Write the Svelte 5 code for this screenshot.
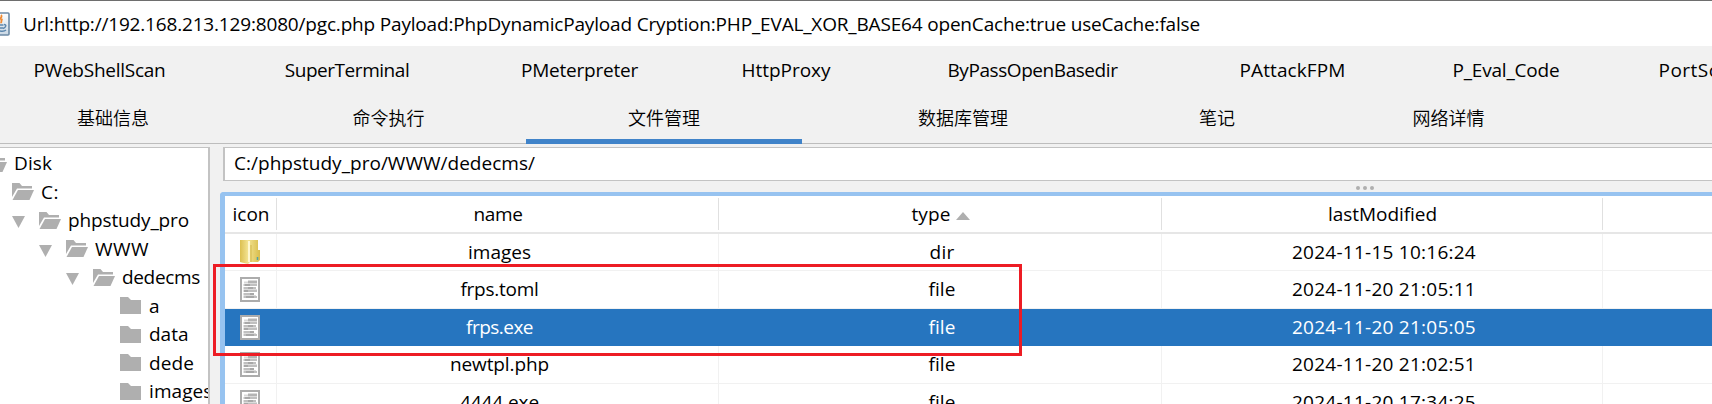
<script>
  const plugins = [
    ['PWebShellScan', 248, 132],
    ['SuperTerminal', 247, 124.5],
    ['PMeterpreter', 218, 117],
    ['HttpProxy', 195, 89],
    ['ByPassOpenBasedir', 298, 170],
    ['PAttackFPM', 222, 106],
    ['P_Eval_Code', 205, 107],
    ['PortScan', 183, 83],
  ];
  const tabs = [
    ['基础信息', 276],
    ['命令执行', 275],
    ['文件管理', 276],
    ['数据库管理', 322],
    ['笔记', 186],
    ['网络详情', 277],
  ];
  const active = '文件管理';

  const tree = [
    { name: 'Disk', level: -1, open: true, w: 38 },
    { name: 'C:', level: 0, open: true, w: 18 },
    { name: 'phpstudy_pro', level: 1, open: true, arrow: true, w: 121 },
    { name: 'WWW', level: 2, open: true, arrow: true, w: 54 },
    { name: 'dedecms', level: 3, open: true, arrow: true, w: 78 },
    { name: 'a', level: 4, w: 10.5 },
    { name: 'data', level: 4, w: 39.5 },
    { name: 'dede', level: 4, w: 45 },
    { name: 'images', level: 4, w: 63.5 },
  ];

  const files = [
    { name: 'images', nw: 63, type: 'dir', tw: 25, date: '2024-11-15 10:16:24' },
    { name: 'frps.toml', nw: 78, type: 'file', tw: 27, date: '2024-11-20 21:05:11' },
    { name: 'frps.exe', nw: 67, type: 'file', tw: 27, date: '2024-11-20 21:05:05', selected: true },
    { name: 'newtpl.php', nw: 99, type: 'file', tw: 27, date: '2024-11-20 21:02:51' },
    { name: '4444.exe', nw: 79, type: 'file', tw: 27, date: '2024-11-20 17:34:25' },
  ];

  // Spreads the letters of a label so that it takes the given width.
  function fit(node, width) {
    const natural = node.getBoundingClientRect().width;
    node.style.letterSpacing = (width - natural) / node.textContent.length + 'px';
  }
</script>

{#snippet page()}
  <svg class="page" width="20" height="25" viewBox="0 0 20 25">
    <rect x="1" y="1" width="18" height="23" fill="#fff" stroke="#acacac" stroke-width="2" />
    <path d="M8 5H17" stroke="#b4b4b4" stroke-width="3" />
    <path d="M4 5.500H8" stroke="#d8d8d8" stroke-width="2" />
    <path d="M3.500 8H17M3.500 11H16M3.500 14H17M3.500 17H14M3.500 20H17" stroke="#c0c0c0" stroke-width="2" />
    <path d="M3.500 12.500H17M3.500 18.500H16" stroke="#dcdcdc" stroke-width="1" />
    <path d="M5 8h5M8 11h5M4 14h4M10 17h4M6 20h8" stroke="#a0a0a0" stroke-width="1.500" />
  </svg>
{/snippet}

<div class="window">
  <header class="titlebar">
    <svg class="java" width="10" height="24" viewBox="0 0 10 24">
      <defs>
        <linearGradient id="tile" x1="0" y1="0" x2="0" y2="1">
          <stop offset="0" stop-color="#fff" /><stop offset="1" stop-color="#c9d7e4" />
        </linearGradient>
      </defs>
      <rect x="-12" y="1" width="21" height="22" rx="1" fill="url(#tile)" stroke="#6d8ba6" stroke-width="1.6" />
      <path d="M1 3C3 5 0 6-1 9M2.500 7c-2 1 0 3-2 4" fill="none" stroke="#f08a32" stroke-width="1.8" />
      <path d="M0 13h3.500M4 12.500c3 0 2 3-1 4M0 16h3M0 19c3 .5 5 0 6-1" fill="none" stroke="#5b86ad" stroke-width="1.4" />
    </svg>
    <span class="label" use:fit={1177}>Url:http://192.168.213.129:8080/pgc.php Payload:PhpDynamicPayload Cryption:PHP_EVAL_XOR_BASE64 openCache:true useCache:false</span>
  </header>

  <nav class="tabs">
    <div class="row plugins">
      {#each plugins as [name, width, w]}
        <div class="tab" style:width="{width}px"><span class="label" use:fit={w}>{name}</span></div>
      {/each}
    </div>
    <div class="row main">
      {#each tabs as [name, width]}
        <div class="tab" class:active={name === active} style:width="{width}px"><span>{name}</span></div>
      {/each}
    </div>
  </nav>

  <main>
    <aside class="tree">
      {#each tree as item}
        <div class="node" style:margin-left="{12 + (item.level - 1) * 27}px">
          <span class="arrow">
            {#if item.arrow}
              <svg width="13" height="12" viewBox="0 0 13 12"><path d="M0 0H13L6.500 12Z" fill="#afafaf" /></svg>
            {/if}
          </span>
          {#if item.open}
            <svg class="folder" width="22" height="17" viewBox="0 0 22 17">
              <path d="M0 0H7.500L10 3H20V5.500H5L0 14Z" fill="#afafaf" />
              <path d="M6 7H22L17.500 17H0.500Z" fill="#afafaf" />
            </svg>
          {:else}
            <svg class="folder" width="22" height="17" viewBox="0 0 22 17">
              <path d="M0 0H8L11 3H21V17H0Z" fill="#afafaf" />
            </svg>
          {/if}
          <span class="label" use:fit={item.w}>{item.name}</span>
        </div>
      {/each}
    </aside>

    <section class="content">
      <div class="path"><span class="label" use:fit={301}>C:/phpstudy_pro/WWW/dedecms/</span></div>
      <div class="splitter"><i></i><i></i><i></i></div>
      <div class="table">
        <div class="line head">
          <div class="cell"><span class="label" use:fit={37}>icon</span></div>
          <div class="cell"><span class="label" use:fit={49}>name</span></div>
          <div class="cell sort">
            <span class="label" use:fit={39}>type</span>
            <svg width="14" height="8" viewBox="0 0 14 8"><path d="M0 8L7 0L14 8Z" fill="#afafaf" /></svg>
          </div>
          <div class="cell"><span class="label" use:fit={109}>lastModified</span></div>
          <div class="cell"></div>
        </div>
        {#each files as file}
          <div class="line" class:selected={file.selected}>
            <div class="cell">
              {#if file.type === 'dir'}
                <svg class="page" width="20" height="25" viewBox="0 0 20 25">
                  <defs>
                    <linearGradient id="gold" x1="0" x2="1" y1="0" y2="0">
                      <stop offset="0" stop-color="#dcc050" /><stop offset=".4" stop-color="#f3e391" /><stop offset="1" stop-color="#d8bd4c" />
                    </linearGradient>
                  </defs>
                  <path d="M0 0H18V10H20V20L18 22H10L8 24L0 22Z" fill="url(#gold)" />
                  <path d="M9 1V22" stroke="#fff8d0" stroke-width="2" />
                  <path d="M11 5V22" stroke="#d2b74c" stroke-width="1" />
                  <path d="M17.500 17v3" stroke="#4fa3a8" stroke-width="1.500" />
                </svg>
              {:else}
                {@render page()}
              {/if}
            </div>
            <div class="cell"><span class="label" use:fit={file.nw}>{file.name}</span></div>
            <div class="cell"><span class="label" use:fit={file.tw}>{file.type}</span></div>
            <div class="cell"><span class="label" use:fit={184}>{file.date}</span></div>
            <div class="cell"></div>
          </div>
        {/each}
      </div>
    </section>
  </main>

  <div class="highlight"></div>
</div>

<style>
  :global(body) { margin: 0; }
  .window {
    position: relative;
    box-sizing: border-box;
    width: 1712px;
    height: 404px;
    overflow: hidden;
    display: flex;
    flex-direction: column;
    border-top: 1px solid #6e6e6e;
    background: #f1f1f1;
    color: #000;
    font: 19px/26px 'Open Sans', 'Noto Sans CJK SC', sans-serif;
    font-stretch: 93%;
    white-space: nowrap;
  }
  svg { display: block; flex: none; }
  .label { display: inline-block; flex: none; }
  .titlebar {
    flex: none;
    height: 45px;
    display: flex;
    align-items: flex-start;
    gap: 13px;
    background: #fff;
  }
  .titlebar .label { margin-top: 10px; }
  .java { margin-top: 11px; }
  .tabs {
    flex: none;
    box-sizing: border-box;
    height: 98px;
    border-bottom: 1px solid #bdbdbd;
  }
  .row { display: flex; margin-left: -25px; height: 49px; }
  .plugins { margin-left: -24.5px; }
  .tab {
    flex: none;
    box-sizing: border-box;
    display: flex;
    justify-content: center;
    padding-top: 11px;
  }
  .main .tab { padding-top: 10px; font: 350 18px/24px 'Noto Sans CJK SC', sans-serif; }
  .main .tab.active { border-bottom: 5px solid #4083c9; }
  main { flex: 1; min-height: 0; display: flex; gap: 13px; padding-top: 3px; }
  .tree {
    flex: none;
    box-sizing: border-box;
    width: 210px;
    overflow: hidden;
    border: solid #c3c3c3;
    border-width: 1px 2px 0 0;
    background: #fff;
  }
  .node { display: flex; height: 28.5px; align-items: flex-start; }
  .arrow { flex: none; width: 13px; margin-right: 14px; padding-top: 11px; }
  .folder { margin: 6.5px 7px 0 0; }
  .node .label { margin-top: 2px; }
  .content { flex: 1; min-width: 0; display: flex; flex-direction: column; }
  .path {
    flex: none;
    box-sizing: border-box;
    height: 34px;
    padding: 2px 0 0 9px;
    border: solid #c3c3c3;
    border-width: 1px 0 1px 2px;
    background: #fff;
  }
  .splitter {
    flex: none;
    height: 11px;
    display: flex;
    justify-content: center;
    gap: 3px;
    padding: 5px 0 0 793px;
    box-sizing: border-box;
    width: 1490px;
  }
  .splitter i { width: 4px; height: 4px; border-radius: 50%; background: #afafaf; }
  .table {
    flex: 1;
    min-height: 0;
    margin-left: -3px;
    border: solid #97c3f0;
    border-width: 4px 0 0 5px;
    border-top-left-radius: 4px;
    background: #fff;
  }
  .line {
    display: grid;
    grid-template-columns: 52px 442px 443px 441px 1fr;
    height: 37.5px;
    box-sizing: border-box;
    border-bottom: 1px solid #f1f1f1;
  }
  .cell { display: flex; justify-content: center; border-right: 1px solid #f1f1f1; padding: 5px 0 0 4px; box-sizing: border-box; }
  .cell:last-child { border-right: 0; }
  .head { height: 38px; border-bottom: 2px solid #e6e6e6; }
  .head + .line { height: 37px; }
  .head .cell { margin: 2px 0; padding: 3px 0 0 1px; border-color: #e0e0e0; }
  .sort { gap: 5px; align-items: flex-start; }
  .sort svg { margin-top: 11px; }
  .page { margin: 1px 0 0 -5px; }
  .selected { background: #2675bf; border-color: #2675bf; color: #fff; }
  .selected .cell { border-color: transparent; }
  .highlight {
    position: absolute;
    left: 213px;
    top: 263px;
    box-sizing: border-box;
    width: 809px;
    height: 92px;
    border: 3px solid #ed1c24;
  }
</style>
